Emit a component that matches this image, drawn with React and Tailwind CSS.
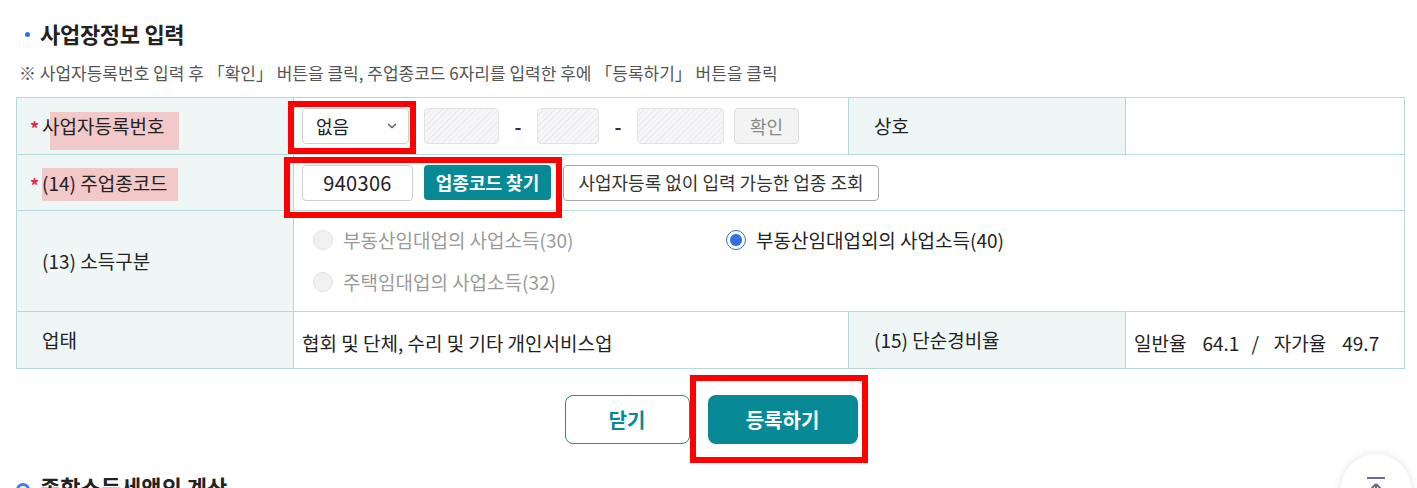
import React from 'react';
import { ChevronDown } from 'lucide-react';

const FONT = '[font-family:"Noto_Sans_CJK_KR","Noto_Sans",sans-serif]';

const hatch =
  'bg-[repeating-linear-gradient(135deg,#ececef_0px,#ececef_1px,#f6f6f8_1px,#f6f6f8_4px)]';

function Label({ children, required, className = '' }) {
  return (
    <td className={`border border-[#b8d9dc] bg-[#eef7f6] align-middle ${className}`}>
      <div className="flex items-center pl-[13px] text-[19px] leading-[28px] text-[#222]">
        <span className="w-[12px] pt-[4px] text-[#e8264f] text-[18px] font-bold">{required ? '*' : ''}</span>
        <span className="relative">{children}</span>
      </div>
    </td>
  );
}

function Radio({ checked, disabled, children }) {
  return (
    <label className="flex items-center gap-[10px] h-[42px]">
      {checked ? (
        <span className="w-[20px] h-[20px] rounded-full border-[1.5px] border-[#2f6fe3] flex items-center justify-center bg-white">
          <span className="w-[12px] h-[12px] rounded-full bg-[#2f6fe3]" />
        </span>
      ) : (
        <span className="w-[20px] h-[20px] rounded-full border border-[#e2e2e2] bg-[#f1f1f1]" />
      )}
      <span className={`text-[19px] ${disabled ? 'text-[#9a9a9a]' : 'text-[#222]'}`}>{children}</span>
    </label>
  );
}

function RedBox({ className }) {
  return <div className={`absolute border-[6px] border-[#ff0000] pointer-events-none ${className}`} />;
}

export default function App() {
  return (
    <div className={`relative w-[1417px] h-[488px] overflow-hidden bg-white ${FONT}`}>
      <div className="pl-[16px] pr-[13px] pt-[17px]">
        <h2 className="flex items-center h-[32px] pl-[9px] text-[22px] font-bold text-[#222] tracking-[-0.3px]">
          <span className="w-[5px] h-[5px] rounded-full bg-[#2f6fe3] mr-[10px] mt-[3px]" />
          사업장정보 입력
        </h2>
        <p className="mt-[11px] pl-[3px] text-[17px] text-[#555] leading-[26px]">
          ※ 사업자등록번호 입력 후 「확인」 버튼을 클릭, 주업종코드 6자리를 입력한 후에 「등록하기」 버튼을 클릭
        </p>

        <table className="mt-[11px] w-[1388px] border-collapse table-fixed">
          <colgroup>
            <col className="w-[277px]" />
            <col className="w-[555px]" />
            <col className="w-[277px]" />
            <col className="w-[279px]" />
          </colgroup>
          <tbody>
            <tr className="h-[57px]">
              <Label required>
                <span className="absolute left-[8px] top-0 w-[129px] h-[38px] bg-[#f2c8c9]" />
                <span className="relative">사업자등록번호</span>
              </Label>
              <td className="border border-[#b8d9dc] pl-[8px]">
                <div className="flex items-center h-[36px]">
                  <div className="flex items-center justify-between w-[107px] h-[36px] border border-[#cfcfcf] rounded-[4px] pl-[13px] pr-[9px] text-[18px] text-[#222]">
                    없음
                    <ChevronDown className="w-[14px] h-[14px] text-[#555]" strokeWidth={2} />
                  </div>
                  <div className={`ml-[15px] w-[75px] h-[36px] rounded-[4px] border border-[#e3e3e6] ${hatch}`} />
                  <span className="w-[38px] text-center text-[19px] font-semibold text-[#333]">-</span>
                  <div className={`w-[62px] h-[36px] rounded-[4px] border border-[#e3e3e6] ${hatch}`} />
                  <span className="w-[38px] text-center text-[19px] font-semibold text-[#333]">-</span>
                  <div className={`w-[87px] h-[36px] rounded-[4px] border border-[#e3e3e6] ${hatch}`} />
                  <button className="ml-[10px] w-[65px] h-[36px] rounded-[4px] border border-[#dedede] bg-[#f3f3f3] text-[18px] text-[#888]">
                    확인
                  </button>
                </div>
              </td>
              <td className="border border-[#b8d9dc] bg-[#eef7f6] pl-[25px] text-[19px] text-[#222]">상호</td>
              <td className="border border-[#b8d9dc]" />
            </tr>

            <tr className="h-[56px]">
              <Label required>
                <span className="absolute left-0 -top-[1px] w-[136px] h-[33px] bg-[#f2c8c9]" />
                <span className="relative">(14) 주업종코드</span>
              </Label>
              <td colSpan={3} className="border border-[#b8d9dc] pl-[8px]">
                <div className="flex items-center h-[36px]">
                  <div className="flex items-center justify-center w-[111px] h-[36px] border border-[#cfcfcf] rounded-[4px] text-[20px] tracking-[0.3px] text-[#222]">
                    940306
                  </div>
                  <button className="ml-[11px] w-[127px] h-[35px] rounded-[4px] bg-[#078a96] text-[18px] font-bold text-white">
                    업종코드 찾기
                  </button>
                  <button className="ml-[12px] w-[316px] h-[36px] rounded-[4px] border border-[#a9a9a9] bg-white text-[18px] text-[#333]">
                    사업자등록 없이 입력 가능한 업종 조회
                  </button>
                </div>
              </td>
            </tr>

            <tr className="h-[101px]">
              <Label>(13) 소득구분</Label>
              <td colSpan={3} className="border border-[#b8d9dc] pl-[19px]">
                <div className="grid grid-cols-[413px_1fr]">
                  <Radio disabled>부동산임대업의 사업소득(30)</Radio>
                  <Radio checked>부동산임대업외의 사업소득(40)</Radio>
                  <Radio disabled>주택임대업의 사업소득(32)</Radio>
                </div>
              </td>
            </tr>

            <tr className="h-[57px]">
              <Label>업태</Label>
              <td className="border border-[#b8d9dc] pl-[8px] pt-[6px] text-[19px] text-[#222]">
                협회 및 단체, 수리 및 기타 개인서비스업
              </td>
              <td className="border border-[#b8d9dc] bg-[#eef7f6] pl-[25px] text-[19px] text-[#222]">(15) 단순경비율</td>
              <td className="border border-[#b8d9dc] pl-[8px] pt-[6px] text-[19px] text-[#222]">
                <div className="flex items-center">
                  <span>일반율</span>
                  <span className="ml-[16px]">64.1</span>
                  <span className="ml-[12px]">/</span>
                  <span className="ml-[15px]">자가율</span>
                  <span className="ml-[16px]">49.7</span>
                </div>
              </td>
            </tr>
          </tbody>
        </table>

        <div className="mt-[26px] flex justify-center gap-[18px] pl-[2px]">
          <button className="w-[125px] h-[49px] rounded-[8px] border border-[#1a8d99] bg-white text-[20px] font-semibold text-[#078a96]">
            닫기
          </button>
          <button className="w-[150px] h-[49px] rounded-[8px] bg-[#078a96] text-[20px] font-semibold text-white">
            등록하기
          </button>
        </div>

        <h2 className="mt-[26px] flex items-center h-[32px] text-[22px] font-bold text-[#222]">
          <span className="w-[14px] h-[14px] rounded-full border-[3px] border-[#3f7ef0] mr-[10px] mt-[8px]" />
          종합소득세액의 계산
        </h2>
      </div>

      <RedBox className="left-[288px] top-[101px] w-[128px] h-[53px]" />
      <RedBox className="left-[284px] top-[157px] w-[278px] h-[61px]" />
      <RedBox className="left-[690px] top-[375px] w-[178px] h-[88px]" />

      <div className="absolute left-[1341px] top-[454px] w-[70px] h-[70px] rounded-full bg-white shadow-[0_0_10px_rgba(0,0,0,0.12)] flex justify-center pt-[23px]">
        <svg width="20" height="16" viewBox="0 0 20 16" fill="none">
          <line x1="1" y1="1" x2="19" y2="1" stroke="#6b6d86" strokeWidth="2" />
          <path d="M10 7 L5 12 M10 7 L15 12 M10 7 L10 16" stroke="#6b6d86" strokeWidth="2" />
        </svg>
      </div>
    </div>
  );
}
